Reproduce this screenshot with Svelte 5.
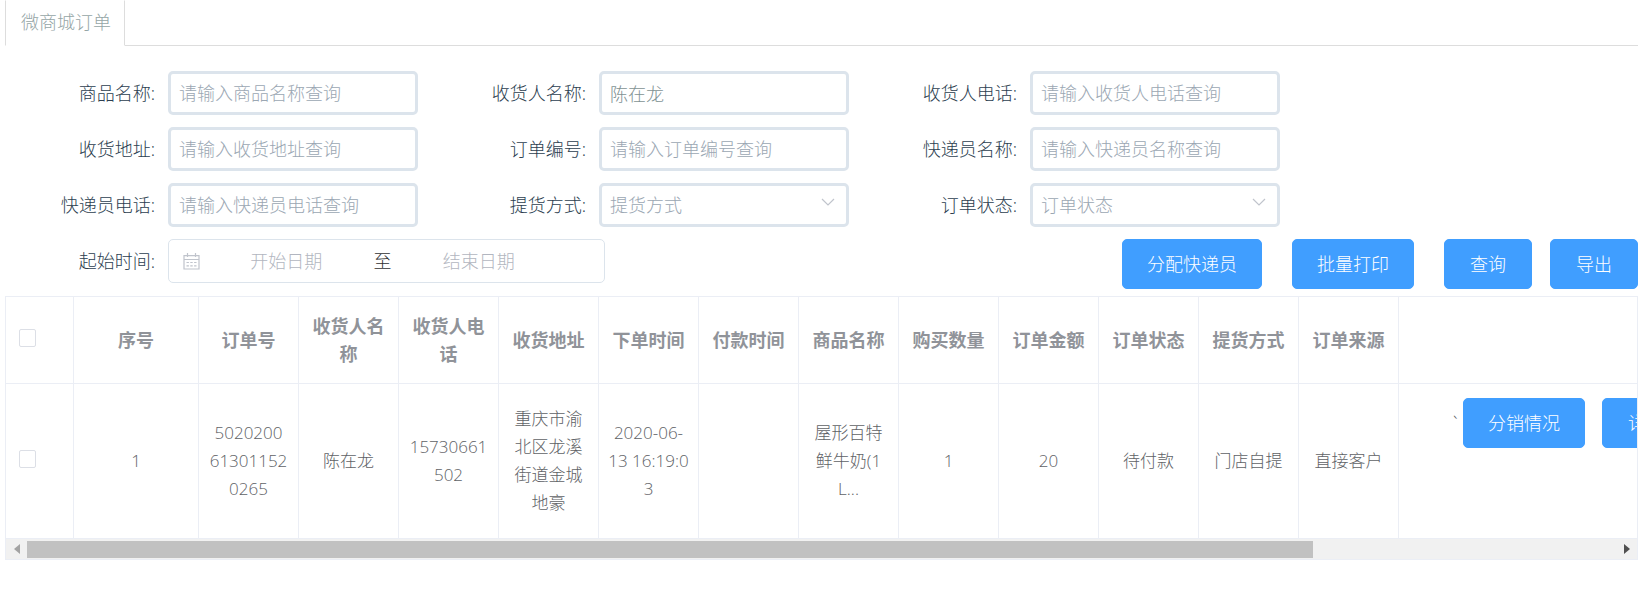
<script lang="ts">
	type Field = {
		id: string;
		label: string;
		placeholder: string;
		value?: string;
		options?: string[];
	};

	let fields: Field[] = $state([
		{ id: 'goods', label: '商品名称', placeholder: '请输入商品名称查询', value: '' },
		{ id: 'receiver', label: '收货人名称', placeholder: '请输入收货人名称查询', value: '陈在龙' },
		{ id: 'phone', label: '收货人电话', placeholder: '请输入收货人电话查询', value: '' },
		{ id: 'address', label: '收货地址', placeholder: '请输入收货地址查询', value: '' },
		{ id: 'order-no', label: '订单编号', placeholder: '请输入订单编号查询', value: '' },
		{ id: 'courier', label: '快递员名称', placeholder: '请输入快递员名称查询', value: '' },
		{ id: 'courier-phone', label: '快递员电话', placeholder: '请输入快递员电话查询', value: '' },
		{ id: 'pickup', label: '提货方式', placeholder: '提货方式', value: '', options: ['门店自提'] },
		{ id: 'status', label: '订单状态', placeholder: '订单状态', value: '', options: ['待付款'] },
	]);

	const columns = [
		'序号', '订单号', '收货人名称', '收货人电话', '收货地址', '下单时间', '付款时间',
		'商品名称', '购买数量', '订单金额', '订单状态', '提货方式', '订单来源',
	];

	// one array per cell, one entry per line
	const rows = [
		[
			['1'],
			['5020200', '61301152', '0265'],
			['陈在龙'],
			['15730661', '502'],
			['重庆市渝', '北区龙溪', '街道金城', '地豪'],
			['2020-06-', '13 16:19:0', '3'],
			[],
			['屋形百特', '鲜牛奶(1', 'L...'],
			['1'],
			['20'],
			['待付款'],
			['门店自提'],
			['直接客户'],
		],
	];

	let scroller: HTMLDivElement;
	let left = $state(0);
	let ratio = $state(0.81);

	function sync() {
		ratio = scroller.clientWidth / scroller.scrollWidth;
		left = scroller.scrollLeft / scroller.scrollWidth;
	}

	$effect(() => {
		sync();
	});
</script>

<svelte:window onresize={sync} />

<main class="page">
	<nav class="tabs">
		<a class="tab" href="#orders">微商城订单</a>
	</nav>

	<form class="filters" onsubmit={(e) => e.preventDefault()}>
		<div class="fields">
			{#each fields as f (f.id)}
				<div class="field">
					<label for={f.id}>{f.label}:</label>
					{#if f.options}
						<div class="select">
							<select id={f.id} class="control" bind:value={f.value}>
								<option value="">{f.placeholder}</option>
								{#each f.options as o}
									<option>{o}</option>
								{/each}
							</select>
							<svg viewBox="0 0 14 8" width="14" height="8" aria-hidden="true">
								<path d="M1 1l6 6 6-6" fill="none" stroke="#c0c4cc" stroke-width="1.2" />
							</svg>
						</div>
					{:else}
						<input id={f.id} class="control" type="text" placeholder={f.placeholder} bind:value={f.value} />
					{/if}
				</div>
			{/each}
		</div>

		<div class="bottom">
			<div class="period">
				<label for="date-start">起始时间:</label>
				<div class="range">
					<svg viewBox="0 0 17 17" width="17" height="17" aria-hidden="true">
						<g fill="none" stroke="#c0c4cc" stroke-width="1.2">
							<path d="M1 2.6h15v13.4H1zM1 6.5h15M4.5 0v4M12.5 0v4" />
							<path d="M3.5 9.5h2.4M7.3 9.5h2.4M11.1 9.5h2.4M3.5 12.8h2.4M7.3 12.8h2.4M11.1 12.8h2.4" />
						</g>
					</svg>
					<input id="date-start" type="text" placeholder="开始日期" />
					<span>至</span>
					<input type="text" placeholder="结束日期" aria-label="结束日期" />
				</div>
			</div>
			<div class="actions">
				<button type="button" class="btn">分配快递员</button>
				<button type="button" class="btn">批量打印</button>
				<div class="pair">
					<button type="submit" class="btn">查询</button>
					<button type="button" class="btn">导出</button>
				</div>
			</div>
		</div>
	</form>

	<section class="grid">
		<div class="scroller" bind:this={scroller} onscroll={sync}>
			<table>
				<colgroup>
					<col class="col-check" />
					<col class="col-index" />
					{#each columns.slice(1) as c (c)}
						<col class="col-data" />
					{/each}
					<col class="col-ops" />
				</colgroup>
				<thead>
					<tr>
						<th class="check"><input type="checkbox" aria-label="全选" /></th>
						{#each columns as c (c)}
							<th>{c}</th>
						{/each}
						<th></th>
					</tr>
				</thead>
				<tbody>
					{#each rows as row}
						<tr>
							<td class="check"><input type="checkbox" aria-label="选择" /></td>
							{#each row as lines}
								<td>
									{#each lines as line}
										<div>{line}</div>
									{/each}
								</td>
							{/each}
							<td class="ops">
								<div class="ops-row">
									<span>`</span>
									<button type="button" class="btn">分销情况</button>
									<button type="button" class="btn">详情</button>
								</div>
							</td>
						</tr>
					{/each}
				</tbody>
			</table>
		</div>
		<div class="bar">
			<button type="button" aria-label="向左" onclick={() => scroller.scrollBy(-100, 0)}>
				<svg viewBox="0 0 6 10" width="6" height="10"><path d="M6 0v10L0 5z" fill="#a3a3a3" /></svg>
			</button>
			<div class="track">
				<div class="thumb" style="width: {ratio * 100}%; margin-left: {left * 100}%"></div>
			</div>
			<button type="button" aria-label="向右" onclick={() => scroller.scrollBy(100, 0)}>
				<svg viewBox="0 0 6 10" width="6" height="10"><path d="M0 0v10l6-5z" fill="#505050" /></svg>
			</button>
		</div>
	</section>
</main>

<style>
	:global(body) {
		background: #fff;
	}
	.page,
	.page * {
		box-sizing: border-box;
	}
	.page {
		padding: 0 13px 0 5px;
		font-family: 'Open Sans', 'Noto Sans CJK SC', sans-serif;
		font-size: 18px;
		font-weight: 300;
		line-height: 28px;
		color: #2c3e50;
	}
	input,
	select,
	button {
		font: inherit;
	}

	/* tabs */
	.tabs {
		display: flex;
		border-bottom: 1px solid #ddd;
	}
	.tab {
		margin-bottom: -1px;
		padding: 7px 13px 9px 15px;
		border: 1px solid #ddd;
		border-top-color: transparent;
		border-bottom-color: #fff;
		background: #fff;
		color: #95a5a6;
		text-decoration: none;
	}

	/* filters */
	.filters {
		padding: 25px 0 7px;
	}
	.fields {
		display: grid;
		grid-template-columns: repeat(3, 431fr) 340fr;
		row-gap: 12px;
	}
	.field {
		display: flex;
		align-items: center;
		padding-right: 18px;
	}
	.field:nth-child(3n + 1) {
		grid-column: 1;
	}
	label {
		flex: none;
		width: 163px;
		padding-right: 13px;
		text-align: right;
		white-space: nowrap;
	}
	.control {
		flex: 1;
		width: 100%;
		min-width: 0;
		height: 44px;
		padding: 0 8px;
		border: 3px solid #dce4ec;
		border-radius: 5px;
		background: #fff;
		color: #7f9293;
		outline: none;
	}
	.control::placeholder {
		color: #9ba7b3;
		opacity: 1;
	}
	.select {
		position: relative;
		flex: 1;
		display: flex;
	}
	.select .control {
		appearance: none;
		color: #9ba7b3;
	}
	.select svg {
		position: absolute;
		top: 15px;
		right: 14px;
		pointer-events: none;
	}
	.bottom {
		display: flex;
		justify-content: space-between;
		align-items: flex-start;
		margin-top: 12px;
	}
	.period {
		display: flex;
		align-items: center;
		width: 600px;
	}
	.range {
		flex: 1;
		display: flex;
		align-items: center;
		min-width: 0;
		height: 44px;
		padding: 0 39px 0 14px;
		border: 1px solid #dce4ec;
		border-radius: 5px;
	}
	.range svg {
		flex: none;
	}
	.range input {
		flex: 1;
		min-width: 0;
		padding: 0;
		border: 0;
		background: none;
		text-align: center;
		outline: none;
	}
	.range input::placeholder {
		color: #b2b6c0;
		opacity: 1;
	}
	.range span {
		flex: none;
		width: 20px;
		text-align: center;
		color: #303133;
	}
	.actions {
		display: flex;
		gap: 30px;
	}
	.pair {
		display: flex;
		gap: 18px;
	}
	.btn {
		min-width: 88px;
		padding: 10px 24px;
		border: 1px solid #409eff;
		border-radius: 5px;
		background: #409eff;
		color: #fff;
		white-space: nowrap;
		cursor: pointer;
	}
	.btn:hover {
		background: #66b1ff;
		border-color: #66b1ff;
	}

	/* table */
	.grid {
		border: 1px solid #ebeef5;
	}
	.scroller {
		overflow-x: auto;
		scrollbar-width: none;
	}
	table {
		width: 2016px;
		table-layout: fixed;
		border-collapse: separate;
		border-spacing: 0;
	}
	.col-check { width: 68px; }
	.col-index { width: 125px; }
	.col-data  { width: 100px; }
	.col-ops   { width: 623px; }
	th,
	td {
		padding: 0 8px;
		border-right: 1px solid #ebeef5;
		border-bottom: 1px solid #ebeef5;
		text-align: center;
		vertical-align: middle;
	}
	th {
		height: 87px;
		padding: 0 12px;
		font-weight: 700;
		color: #909399;
	}
	td {
		height: 155px;
		font-size: 17px;
		color: #606266;
		white-space: nowrap;
	}
	.check {
		padding: 0 13px;
		text-align: left;
	}
	.check input {
		display: block;
		appearance: none;
		width: 17px;
		height: 18px;
		margin: 0 0 4px;
		border: 1px solid #dcdfe6;
		border-radius: 2px;
		background: #fff;
	}
	.check input:checked {
		background: #409eff;
		border-color: #409eff;
	}
	.ops {
		padding: 14px 54px;
		vertical-align: top;
	}
	.ops-row {
		display: flex;
		align-items: center;
		gap: 17px;
		font-size: 18px;
	}
	.ops-row span {
		width: 10px;
		margin-right: -17px;
		text-align: left;
	}

	/* scrollbar */
	.bar {
		display: flex;
		align-items: center;
		height: 20px;
		background: #f1f1f1;
	}
	.bar button {
		display: flex;
		align-items: center;
		justify-content: center;
		width: 21px;
		height: 17px;
		padding: 0;
		border: 0;
		background: none;
	}
	.track {
		flex: 1;
	}
	.thumb {
		height: 17px;
		background: #c1c1c1;
	}
</style>
